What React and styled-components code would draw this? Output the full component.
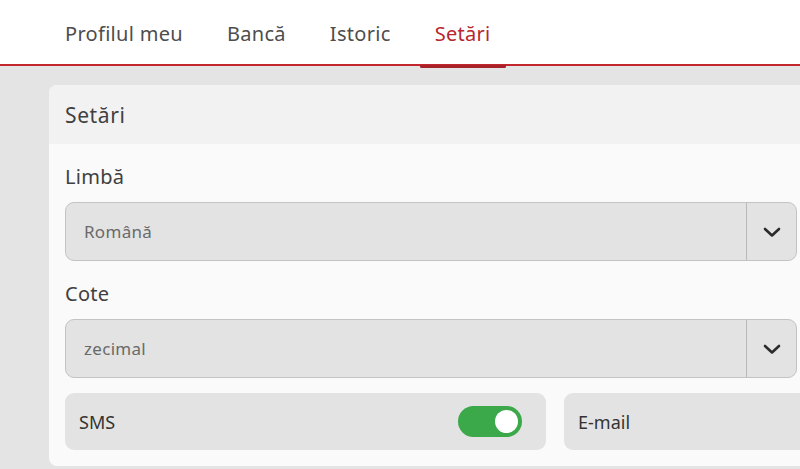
import { useState } from 'react';
import styled, { createGlobalStyle } from 'styled-components';

const GlobalStyle = createGlobalStyle`
  html, body {
    margin: 0;
    padding: 0;
    background: #e4e4e4;
    font-family: "Noto Sans", Lato, sans-serif;
    overflow: hidden;
  }
`;

const tabs = ['Profilul meu', 'Bancă', 'Istoric', 'Setări'];

function Chevron() {
  return (
    <svg width="20" height="12" viewBox="0 0 20 12" fill="none">
      <path
        d="M3 3l7 6.5 7-6.5"
        stroke="#2b2b2b"
        strokeWidth="2.6"
        strokeLinecap="round"
        strokeLinejoin="round"
      />
    </svg>
  );
}

function SelectField({ value }) {
  return (
    <StyledSelect>
      <StyledSelectValue>{value}</StyledSelectValue>
      <StyledSelectButton>
        <Chevron />
      </StyledSelectButton>
    </StyledSelect>
  );
}

export default function App() {
  const [active, setActive] = useState(3);
  const [sms, setSms] = useState(true);
  const [email, setEmail] = useState(false);

  return (
    <>
      <GlobalStyle />
      <StyledHeader>
        <StyledTabs>
          {tabs.map((tab, i) => (
            <StyledTab key={tab} $active={i === active} onClick={() => setActive(i)}>
              {tab}
            </StyledTab>
          ))}
        </StyledTabs>
      </StyledHeader>
      <StyledMain>
        <StyledCard>
          <StyledCardHeader>Setări</StyledCardHeader>
          <StyledCardBody>
            <StyledLabel>Limbă</StyledLabel>
            <SelectField value="Română" />
            <StyledLabel>Cote</StyledLabel>
            <SelectField value="zecimal" />
            <StyledToggleRow>
              <StyledToggleBox>
                <span>SMS</span>
                <StyledSwitch $on={sms} onClick={() => setSms(!sms)} />
              </StyledToggleBox>
              <StyledToggleBox>
                <span>E-mail</span>
                {email && <StyledSwitch $on onClick={() => setEmail(false)} />}
              </StyledToggleBox>
            </StyledToggleRow>
          </StyledCardBody>
        </StyledCard>
      </StyledMain>
    </>
  );
}

const StyledHeader = styled.header`
  height: 64px;
  background: #fff;
  border-bottom: 2px solid #c3262d;
`;

const StyledTabs = styled.nav`
  display: flex;
  height: 100%;
  padding-left: 50px;
  gap: 14px;
`;

const StyledTab = styled.div`
  position: relative;
  display: flex;
  align-items: center;
  padding: 2px 15px 0;
  font-size: 20px;
  letter-spacing: 0.3px;
  color: ${({ $active }) => ($active ? '#b8262e' : '#4d4d4d')};
  cursor: pointer;

  &::after {
    content: '';
    display: ${({ $active }) => ($active ? 'block' : 'none')};
    position: absolute;
    left: 0;
    right: 0;
    bottom: -4px;
    height: 3px;
    background: #a8222a;
    border-radius: 2px;
  }
`;

const StyledMain = styled.main`
  padding: 19px 0 0 49px;
`;

const StyledCard = styled.section`
  background: #fafafa;
  border-radius: 8px 0 0 8px;
  overflow: hidden;
  padding-bottom: 16px;
`;

const StyledCardHeader = styled.div`
  height: 59px;
  display: flex;
  align-items: center;
  padding-left: 16px;
  background: #f2f2f2;
  font-size: 21px;
  letter-spacing: 0.6px;
  color: #404040;
`;

const StyledCardBody = styled.div`
  padding: 0 3px 0 16px;
`;

const StyledLabel = styled.div`
  font-size: 20px;
  letter-spacing: 0.3px;
  color: #404040;
  height: 58px;
  display: flex;
  align-items: center;
  padding-top: 6px;
  box-sizing: border-box;
`;

const StyledSelect = styled.div`
  display: flex;
  height: 59px;
  box-sizing: border-box;
  border: 1px solid #c3c3c3;
  border-radius: 9px;
  background: #e3e3e3;
`;

const StyledSelectValue = styled.div`
  flex: 1;
  display: flex;
  align-items: center;
  padding-left: 18px;
  font-size: 17px;
  letter-spacing: 0.3px;
  color: #6a6a6a;
`;

const StyledSelectButton = styled.div`
  width: 49px;
  display: flex;
  align-items: center;
  justify-content: center;
  border-left: 1px solid #b9b9b9;
`;

const StyledToggleRow = styled.div`
  display: grid;
  grid-template-columns: 481px 1fr;
  gap: 18px;
  margin-top: 15px;
  margin-right: -20px;
`;

const StyledToggleBox = styled.div`
  height: 57px;
  display: flex;
  align-items: center;
  justify-content: space-between;
  padding: 0 24px 0 14px;
  background: #e3e3e3;
  border-radius: 9px;
  font-size: 18px;
  color: #333;
`;

const StyledSwitch = styled.div`
  position: relative;
  width: 64px;
  height: 31px;
  border-radius: 16px;
  background: ${({ $on }) => ($on ? '#3ba84a' : '#bbb')};
  cursor: pointer;

  &::after {
    content: '';
    position: absolute;
    top: 4px;
    left: ${({ $on }) => ($on ? '37px' : '4px')};
    width: 23px;
    height: 23px;
    border-radius: 50%;
    background: #fff;
  }
`;
